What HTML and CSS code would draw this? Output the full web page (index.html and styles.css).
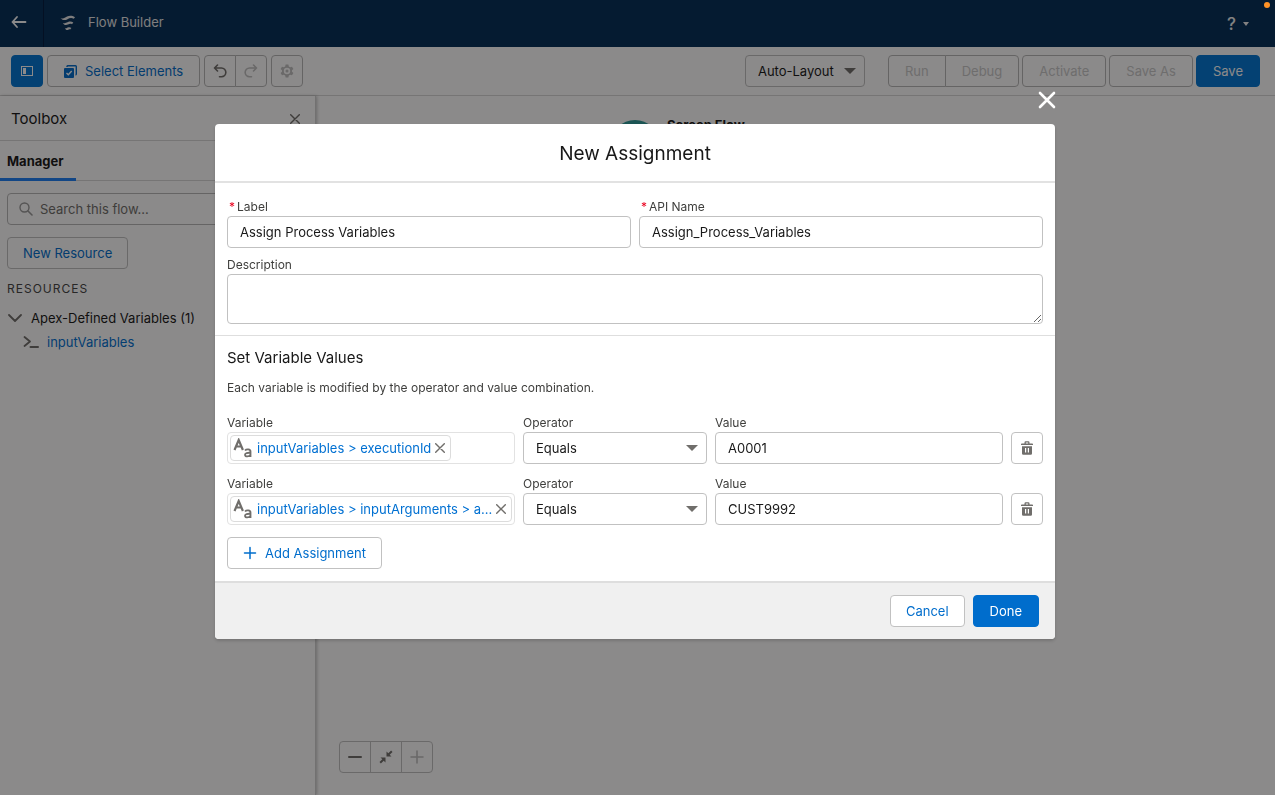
FILE: index.html
```
<!DOCTYPE html>
<html lang="en">
<head>
    <meta charset="utf-8">
    <title>Flow Builder</title>
    <link rel="stylesheet" href="styles.css">
</head>
<body>
    <div class="app">
        <header class="header">
            <a href="#" class="back" aria-label="Back">
                <svg width="16" height="14" viewBox="0 0 16 14"><path d="M6 2 1.500 7 6 12M1.500 7H14.500" fill="none" stroke="currentColor" stroke-width="1.800" stroke-linecap="round" stroke-linejoin="round"/></svg>
            </a>
            <svg class="flow-logo" width="16" height="16" viewBox="0 0 16 16"><path d="M.5 3.200C4 4.200 4.500 2.800 7 1.600 9.500.4 12 .4 15 2.200L13.800 3.800C11.500 2.600 9.500 3 7.500 4.200 5 5.600 2.800 5.400.5 3.200ZM2.800 8.200C5 8.800 6 7.600 8 7 10 6.300 11.500 6.400 13.300 7.600L12 9.200C10.500 8.400 9.300 8.900 8 9.600 6 10.500 4.500 10.200 2.800 8.200ZM5 13.200C6.500 13.600 7.200 12.600 8.500 12.300 9.500 12.100 10.500 12.300 11.400 13L10.200 14.600C9.200 14.100 8.700 14.500 8 14.900 6.800 15.400 5.800 14.900 5 13.200Z" fill="currentColor"/></svg>
            <span class="app-name">Flow Builder</span>
            <button class="help" aria-label="Help">
                <span>?</span>
                <svg width="6" height="4" viewBox="0 0 6 4"><path d="M0 0H6L3 4Z" fill="currentColor"/></svg>
            </button>
        </header>

        <div class="toolbar">
            <button class="btn btn-icon btn-brand" aria-label="Toggle Toolbox">
                <svg width="12" height="10" viewBox="0 0 12 10"><rect x=".5" y=".5" width="11" height="9" fill="none" stroke="currentColor"/><path d="M2 2H5V8H2Z" fill="currentColor"/></svg>
            </button>
            <button class="btn btn-select">
                <svg width="13" height="13" viewBox="0 0 13 13"><path d="M3 2V1.500A1 1 0 0 1 4 .7H11.500A.8.8 0 0 1 12.300 1.500V9A1 1 0 0 1 11.500 10" fill="none" stroke="currentColor" stroke-width="1.400"/><rect x="0" y="3" width="10" height="10" rx="1" fill="currentColor"/><path d="M2.500 8 4.300 9.800 7.700 6" fill="none" stroke="#fff" stroke-width="1.400"/></svg>
                Select Elements
            </button>
            <div class="btn-group">
                <button class="btn btn-icon" aria-label="Undo">
                    <svg width="14" height="14" viewBox="0 0 14 14"><path d="M4.500 1 1.500 4 4.500 7M1.500 4H8.500A4.300 4.300 0 0 1 8.500 12.700H6.500" fill="none" stroke="currentColor" stroke-width="1.600" stroke-linecap="round" stroke-linejoin="round"/></svg>
                </button>
                <button class="btn btn-icon" aria-label="Redo" disabled>
                    <svg width="14" height="14" viewBox="0 0 14 14"><path d="M9.500 1 12.500 4 9.500 7M12.500 4H5.500A4.300 4.300 0 0 0 5.500 12.700H7.500" fill="none" stroke="currentColor" stroke-width="1.600" stroke-linecap="round" stroke-linejoin="round"/></svg>
                </button>
            </div>
            <button class="btn btn-icon" aria-label="Settings" disabled>
                <svg width="14" height="14" viewBox="0 0 14 14"><path d="M5.600.6H8.400L8.800 2.500 10.200 3.300 12 2.700 13.400 5 12 6.300V7.700L13.400 9 12 11.300 10.200 10.700 8.800 11.500 8.400 13.400H5.600L5.200 11.500 3.800 10.700 2 11.300.6 9 2 7.700V6.300L.6 5 2 2.700 3.800 3.300 5.200 2.500ZM7 3.800A3.200 3.200 0 1 0 7 10.200 3.200 3.200 0 1 0 7 3.800Z" fill="currentColor" fill-rule="evenodd"/><circle cx="7" cy="7" r="1.500" fill="currentColor"/></svg>
            </button>
            <div class="toolbar-right">
                <div class="select layout-select">
                    <select aria-label="Layout"><option>Auto-Layout</option></select>
                </div>
                <div class="btn-group">
                    <button class="btn" disabled>Run</button>
                    <button class="btn" disabled>Debug</button>
                </div>
                <button class="btn" disabled>Activate</button>
                <button class="btn" disabled>Save As</button>
                <button class="btn btn-brand">Save</button>
            </div>
        </div>

        <div class="workspace">
            <aside class="toolbox">
                <div class="toolbox-head">
                    <h2>Toolbox</h2>
                    <button class="plain" aria-label="Close Toolbox">
                        <svg width="10" height="10" viewBox="0 0 10 10"><path d="M.7.7 9.300 9.300M9.300.7.7 9.300" stroke="currentColor" stroke-width="1.400" stroke-linecap="round"/></svg>
                    </button>
                </div>
                <nav class="tabs"><a href="#" class="tab">Manager</a></nav>
                <div class="toolbox-body">
                    <div class="search">
                        <svg width="14" height="14" viewBox="0 0 14 14"><circle cx="5.500" cy="5.500" r="4.500" fill="none" stroke="currentColor" stroke-width="1.400"/><path d="M9 9 13 13" stroke="currentColor" stroke-width="1.600" stroke-linecap="round"/></svg>
                        <input type="text" placeholder="Search this flow..." aria-label="Search this flow">
                    </div>
                    <button class="btn">New Resource</button>
                    <h3>Resources</h3>
                    <div class="tree-row">
                        <svg width="14" height="8" viewBox="0 0 14 8"><path d="M1 1 7 7 13 1" fill="none" stroke="currentColor" stroke-width="1.800" stroke-linecap="round" stroke-linejoin="round"/></svg>
                        Apex-Defined Variables (1)
                    </div>
                    <div class="tree-row tree-child">
                        <svg width="16" height="14" viewBox="0 0 16 14"><path d="M1.500 2 7 6.500 1.500 11" fill="none" stroke="currentColor" stroke-width="1.800" stroke-linecap="round" stroke-linejoin="round"/><path d="M7.500 12H15" stroke="currentColor" stroke-width="2" stroke-linecap="round"/></svg>
                        <a href="#">inputVariables</a>
                    </div>
                </div>
            </aside>
            <main class="canvas">
                <div class="start-node">
                    <span class="start-icon"></span>
                    <strong>Screen Flow</strong>
                </div>
                <div class="btn-group zoom">
                    <button class="btn btn-icon" aria-label="Zoom out">
                        <svg width="14" height="14" viewBox="0 0 14 14"><path d="M1 7H13" stroke="currentColor" stroke-width="2" stroke-linecap="round"/></svg>
                    </button>
                    <button class="btn btn-icon" aria-label="Zoom to fit">
                        <svg width="14" height="14" viewBox="0 0 14 14"><path d="M7.500 1.500V6.500H12.500L10.700 4.700 13.500 1.900 12.100.5 9.300 3.300ZM6.500 12.500V7.500H1.500L3.300 9.300.5 12.100 1.900 13.500 4.700 10.700Z" fill="currentColor"/></svg>
                    </button>
                    <button class="btn btn-icon" aria-label="Zoom in" disabled>
                        <svg width="14" height="14" viewBox="0 0 14 14"><path d="M1 7H13M7 1V13" stroke="currentColor" stroke-width="1.600" stroke-linecap="round"/></svg>
                    </button>
                </div>
            </main>
        </div>
    </div>

    <div class="backdrop">
        <section class="modal" role="dialog" aria-labelledby="modal-title">
            <button class="modal-close" aria-label="Close">
                <svg width="18" height="18" viewBox="0 0 18 18"><path d="M2 2 16 16M16 2 2 16" stroke="currentColor" stroke-width="2.600" stroke-linecap="round"/></svg>
            </button>
            <header class="modal-head">
                <h1 id="modal-title">New Assignment</h1>
            </header>
            <form>
                <div class="details">
                    <div class="field">
                        <label for="label"><abbr>*</abbr>Label</label>
                        <input type="text" id="label" value="Assign Process Variables">
                    </div>
                    <div class="field">
                        <label for="api-name"><abbr>*</abbr>API Name</label>
                        <input type="text" id="api-name" value="Assign_Process_Variables">
                    </div>
                    <div class="field field-wide">
                        <label for="description">Description</label>
                        <textarea id="description"></textarea>
                    </div>
                </div>

                <div class="assignments">
                    <h2>Set Variable Values</h2>
                    <p>Each variable is modified by the operator and value combination.</p>

                    <div class="row">
                        <div class="field">
                            <span class="label">Variable</span>
                            <div class="pill-box">
                                <div class="pill">
                                    <svg class="text-icon" width="20" height="20" viewBox="0 0 20 20"><g fill="none" stroke="currentColor"><path d="M1.500 12 5.700 2 9.900 12M3 8.500H8.400" stroke-width="2.200"/><path d="M12 12.500C13.500 10.800 17.500 11 17.500 13.500V19M17.500 14.800C14.500 14.600 12 15 12 16.800 12 19.300 16.500 18.700 17.500 16.500" stroke-width="1.800"/></g></svg>
                                    <a href="#">inputVariables &gt; executionId</a>
                                    <button type="button" class="plain" aria-label="Remove"><svg width="10" height="10" viewBox="0 0 10 10"><path d="M.7.7 9.300 9.300M9.300.7.7 9.300" stroke="currentColor" stroke-width="1.400" stroke-linecap="round"/></svg></button>
                                </div>
                            </div>
                        </div>
                        <div class="field">
                            <label for="operator-1">Operator</label>
                            <div class="select"><select id="operator-1"><option>Equals</option></select></div>
                        </div>
                        <div class="field">
                            <label for="value-1">Value</label>
                            <input type="text" id="value-1" value="A0001">
                        </div>
                        <button type="button" class="btn btn-icon" aria-label="Delete">
                            <svg width="12" height="14" viewBox="0 0 12 14"><path d="M0 3.300A.8.800 0 0 1 .8 2.500H3.500V1.500A1.200 1.200 0 0 1 4.700.3H7.300A1.200 1.200 0 0 1 8.500 1.500V2.500H11.200A.8.800 0 0 1 12 3.300V4H0ZM4.800 2.500H7.200V1.500H4.800ZM1 5.200H11V12.500A1.200 1.200 0 0 1 9.800 13.700H2.200A1.200 1.200 0 0 1 1 12.500ZM4 7V11.500H5.200V7ZM6.800 7V11.500H8V7Z" fill="currentColor" fill-rule="evenodd"/></svg>
                        </button>
                    </div>

                    <div class="row">
                        <div class="field">
                            <span class="label">Variable</span>
                            <div class="pill-box">
                                <div class="pill">
                                    <svg class="text-icon" width="20" height="20" viewBox="0 0 20 20"><g fill="none" stroke="currentColor"><path d="M1.500 12 5.700 2 9.900 12M3 8.500H8.400" stroke-width="2.200"/><path d="M12 12.500C13.500 10.800 17.500 11 17.500 13.500V19M17.500 14.800C14.500 14.600 12 15 12 16.800 12 19.300 16.500 18.700 17.500 16.500" stroke-width="1.800"/></g></svg>
                                    <a href="#">inputVariables &gt; inputArguments &gt; a...</a>
                                    <button type="button" class="plain" aria-label="Remove"><svg width="10" height="10" viewBox="0 0 10 10"><path d="M.7.7 9.300 9.300M9.300.7.7 9.300" stroke="currentColor" stroke-width="1.400" stroke-linecap="round"/></svg></button>
                                </div>
                            </div>
                        </div>
                        <div class="field">
                            <label for="operator-2">Operator</label>
                            <div class="select"><select id="operator-2"><option>Equals</option></select></div>
                        </div>
                        <div class="field">
                            <label for="value-2">Value</label>
                            <input type="text" id="value-2" value="CUST9992">
                        </div>
                        <button type="button" class="btn btn-icon" aria-label="Delete">
                            <svg width="12" height="14" viewBox="0 0 12 14"><path d="M0 3.300A.8.800 0 0 1 .8 2.500H3.500V1.500A1.200 1.200 0 0 1 4.700.3H7.300A1.200 1.200 0 0 1 8.500 1.500V2.500H11.200A.8.800 0 0 1 12 3.300V4H0ZM4.800 2.500H7.200V1.500H4.800ZM1 5.200H11V12.500A1.200 1.200 0 0 1 9.800 13.700H2.200A1.200 1.200 0 0 1 1 12.500ZM4 7V11.500H5.200V7ZM6.800 7V11.500H8V7Z" fill="currentColor" fill-rule="evenodd"/></svg>
                        </button>
                    </div>

                    <button type="button" class="btn btn-add">
                        <svg width="14" height="14" viewBox="0 0 14 14"><path d="M1.500 7H12.500M7 1.500V12.500" stroke="currentColor" stroke-width="1.500" stroke-linecap="round"/></svg>
                        Add Assignment
                    </button>
                </div>

                <footer class="modal-foot">
                    <button type="button" class="btn">Cancel</button>
                    <button type="submit" class="btn btn-brand">Done</button>
                </footer>
            </form>
        </section>
        <span class="dot"></span>
    </div>
</body>
</html>
```
FILE: styles.css
```
* {
    box-sizing: border-box;
}

body {
    margin: 0;
    font-family: Inter, "Liberation Sans", sans-serif;
    font-size: 13px;
    line-height: 20px;
    color: #181818;
}

h1, h2, h3, p {
    margin: 0;
    font-weight: 400;
}

a {
    color: #0070d2;
    text-decoration: none;
}

button, input, select, textarea {
    font: inherit;
    color: inherit;
}

svg {
    display: block;
    flex: none;
}

.app {
    display: flex;
    flex-direction: column;
    min-height: 100vh;
}

/* header */

.header {
    display: flex;
    align-items: center;
    height: 47px;
    padding-right: 26px;
    background: #032e58;
    color: #fff;
}

.back {
    display: flex;
    align-items: center;
    width: 44px;
    height: 47px;
    padding: 0 0 3px 11px;
    border-right: 1px solid #001a3d;
    color: #fff;
}

.flow-logo {
    margin: 0 0 2px 16px;
    color: #e8e8e8;
}

.app-name {
    margin-left: 12px;
    padding-bottom: 3px;
    color: #e8e8e8;
}

.help {
    display: flex;
    align-items: center;
    gap: 7px;
    margin-left: auto;
    padding: 0;
    border: 0;
    background: none;
    color: #f0f0f0;
    font-size: 17px;
    font-weight: 500;
}

/* buttons */

.btn {
    display: inline-flex;
    align-items: center;
    justify-content: center;
    height: 32px;
    padding: 0 15px;
    border: 1px solid #c1c1c1;
    border-radius: 4px;
    background: #fff;
    color: #006dcc;
    white-space: nowrap;
}

.btn:disabled {
    color: #c9c9c9;
}

.btn-brand {
    padding: 0 16px;
    border-color: #006dcc;
    background: #006dcc;
    color: #fff;
}

.btn-group {
    display: flex;
}

.btn-group .btn + .btn {
    margin-left: -1px;
}

.btn-group .btn:not(:last-child) {
    border-top-right-radius: 0;
    border-bottom-right-radius: 0;
}

.btn-group .btn:not(:first-child) {
    border-top-left-radius: 0;
    border-bottom-left-radius: 0;
}

.plain {
    padding: 0;
    border: 0;
    background: none;
    color: #706e6b;
}

/* toolbar */

.toolbar {
    display: flex;
    align-items: center;
    gap: 4px;
    height: 49px;
    padding: 0 15px 0 11px;
    border-bottom: 1px solid #d8d8d8;
}

.toolbar .btn {
    padding: 0 16px;
    border-color: #b8b8b8;
}

.btn-icon, .toolbar .btn-icon {
    width: 32px;
    padding: 0;
}

.btn-icon:not(.btn-brand) {
    color: #706e6b;
}

.btn-icon:disabled {
    color: #c0c0c0;
}

.toolbar .btn-brand {
    border-color: #0176d3;
    background: #0176d3;
}

.btn-select {
    gap: 8px;
}

.toolbar-right {
    display: flex;
    gap: 3px;
    margin-left: auto;
}

.select {
    position: relative;
}

.select select {
    width: 100%;
    height: 32px;
    padding: 0 12px;
    border: 1px solid #c1c1c1;
    border-radius: 4px;
    background: #fff;
    appearance: none;
}

.select::after {
    content: "";
    position: absolute;
    top: 13px;
    right: 9px;
    border: 6px solid transparent;
    border-top-color: #706e6b;
    border-bottom: 0;
    pointer-events: none;
}

.layout-select {
    width: 120px;
    margin-right: 20px;
}

/* toolbox */

.workspace {
    display: flex;
    flex: 1;
}

.toolbox {
    width: 316px;
    border-right: 1px solid #d0d0d0;
    box-shadow: 1px 0 3px rgba(0, 0, 0, .25);
}

.toolbox-head {
    display: flex;
    align-items: center;
    justify-content: space-between;
    height: 45px;
    padding: 1px 15px 0 11px;
    border-bottom: 1px solid #d8d8d8;
}

.toolbox-head h2 {
    font-size: 15px;
}

.tabs {
    display: flex;
    height: 40px;
    border-bottom: 1px solid #d8d8d8;
}

.tab {
    width: 76px;
    height: 40px;
    padding: 0 7px;
    border-bottom: 3px solid #1b7ff5;
    color: #181818;
    font-weight: 700;
    line-height: 41px;
}

.toolbox-body {
    padding: 12px 7px;
}

.search {
    display: flex;
    align-items: center;
    gap: 7px;
    height: 32px;
    margin-bottom: 12px;
    padding: 0 11px;
    border: 1px solid #b8b8b8;
    border-radius: 4px;
    color: #999;
}

.search input {
    flex: 1;
    min-width: 0;
    padding: 0;
    border: 0;
    background: none;
}

.search input::placeholder {
    color: #706e6b;
}

.toolbox h3 {
    margin: 10px 0 7px;
    font-size: 12px;
    letter-spacing: 1px;
    text-transform: uppercase;
    color: #444;
}

.tree-row {
    display: flex;
    align-items: center;
    gap: 9px;
    height: 24px;
    padding-left: 1px;
}

.tree-row svg {
    color: #706e6b;
}

.tree-child {
    gap: 8px;
    padding-left: 16px;
}

/* canvas */

.canvas {
    position: relative;
    flex: 1;
}

.start-node {
    position: absolute;
    top: 24px;
    left: 295px;
    display: flex;
    gap: 8px;
}

.start-icon {
    width: 48px;
    height: 48px;
    border-radius: 50%;
    background: #2e9c9a;
}

.start-node strong {
    line-height: 10px;
}

.zoom {
    position: absolute;
    left: 23px;
    bottom: 22px;
}

.zoom .btn {
    padding: 0;
    background: none;
}

/* modal */

.backdrop {
    position: fixed;
    inset: 0;
    padding: 124px 5px 0 0;
    background: rgba(8, 7, 7, .47);
}

.modal {
    position: relative;
    width: 90%;
    max-width: 840px;
    margin: 0 auto;
    border-radius: 4px;
    background: #fff;
    box-shadow: 0 2px 3px rgba(0, 0, 0, .16);
}

.modal-close {
    position: absolute;
    top: -33px;
    right: -1px;
    padding: 0;
    border: 0;
    background: none;
    color: #fff;
}

.modal-head {
    padding: 17px 16px 15px;
    border-bottom: 2px solid #e2e2e2;
    text-align: center;
}

.modal-head h1 {
    font-size: 19px;
    line-height: 25px;
}

.details {
    display: grid;
    grid-template-columns: 1fr 1fr;
    gap: 7px 8px;
    padding: 14px 12px 11px;
    border-bottom: 1px solid #dedede;
}

.field {
    display: flex;
    flex-direction: column;
    min-width: 0;
}

.field-wide {
    grid-column: 1 / -1;
}

.field label, .label {
    font-size: 12px;
    line-height: 19px;
    color: #3e3e3c;
}

.field abbr {
    margin: 0 2px;
    color: #ea001e;
}

.field input, .field textarea {
    width: 100%;
    height: 32px;
    padding: 0 12px;
    border: 1px solid #c1c1c1;
    border-radius: 4px;
    background: #fff;
}

.field textarea {
    height: 50px;
    resize: vertical;
}

.assignments {
    padding: 10px 12px 12px;
}

.assignments h2 {
    font-size: 15px;
    line-height: 24px;
}

.assignments p {
    margin: 8px 0 15px;
    font-size: 12px;
    color: #3e3e3c;
}

.row {
    display: grid;
    grid-template-columns: minmax(0, 1fr) 184px minmax(0, 1fr) 32px;
    align-items: end;
    gap: 8px;
    margin-bottom: 10px;
}

.pill-box {
    height: 32px;
    padding: 2px;
    border: 1px solid #e2e2e2;
    border-radius: 4px;
}

.pill {
    display: inline-flex;
    align-items: center;
    gap: 4px;
    max-width: 100%;
    height: 26px;
    padding: 0 5px 0 2px;
    border: 1px solid #dcdcdc;
    border-radius: 4px;
    vertical-align: top;
}

.pill a {
    white-space: nowrap;
}

.text-icon {
    color: #706e6b;
}

.btn-add {
    gap: 8px;
    margin-top: 2px;
}

.modal-foot {
    display: flex;
    justify-content: flex-end;
    gap: 8px;
    padding: 12px 16px;
    border-top: 2px solid #dedede;
    border-radius: 0 0 4px 4px;
    background: #f0f0f0;
}

.dot {
    position: absolute;
    top: 2px;
    right: 5px;
    width: 6px;
    height: 6px;
    border-radius: 50%;
    background: #ff9226;
}
```
